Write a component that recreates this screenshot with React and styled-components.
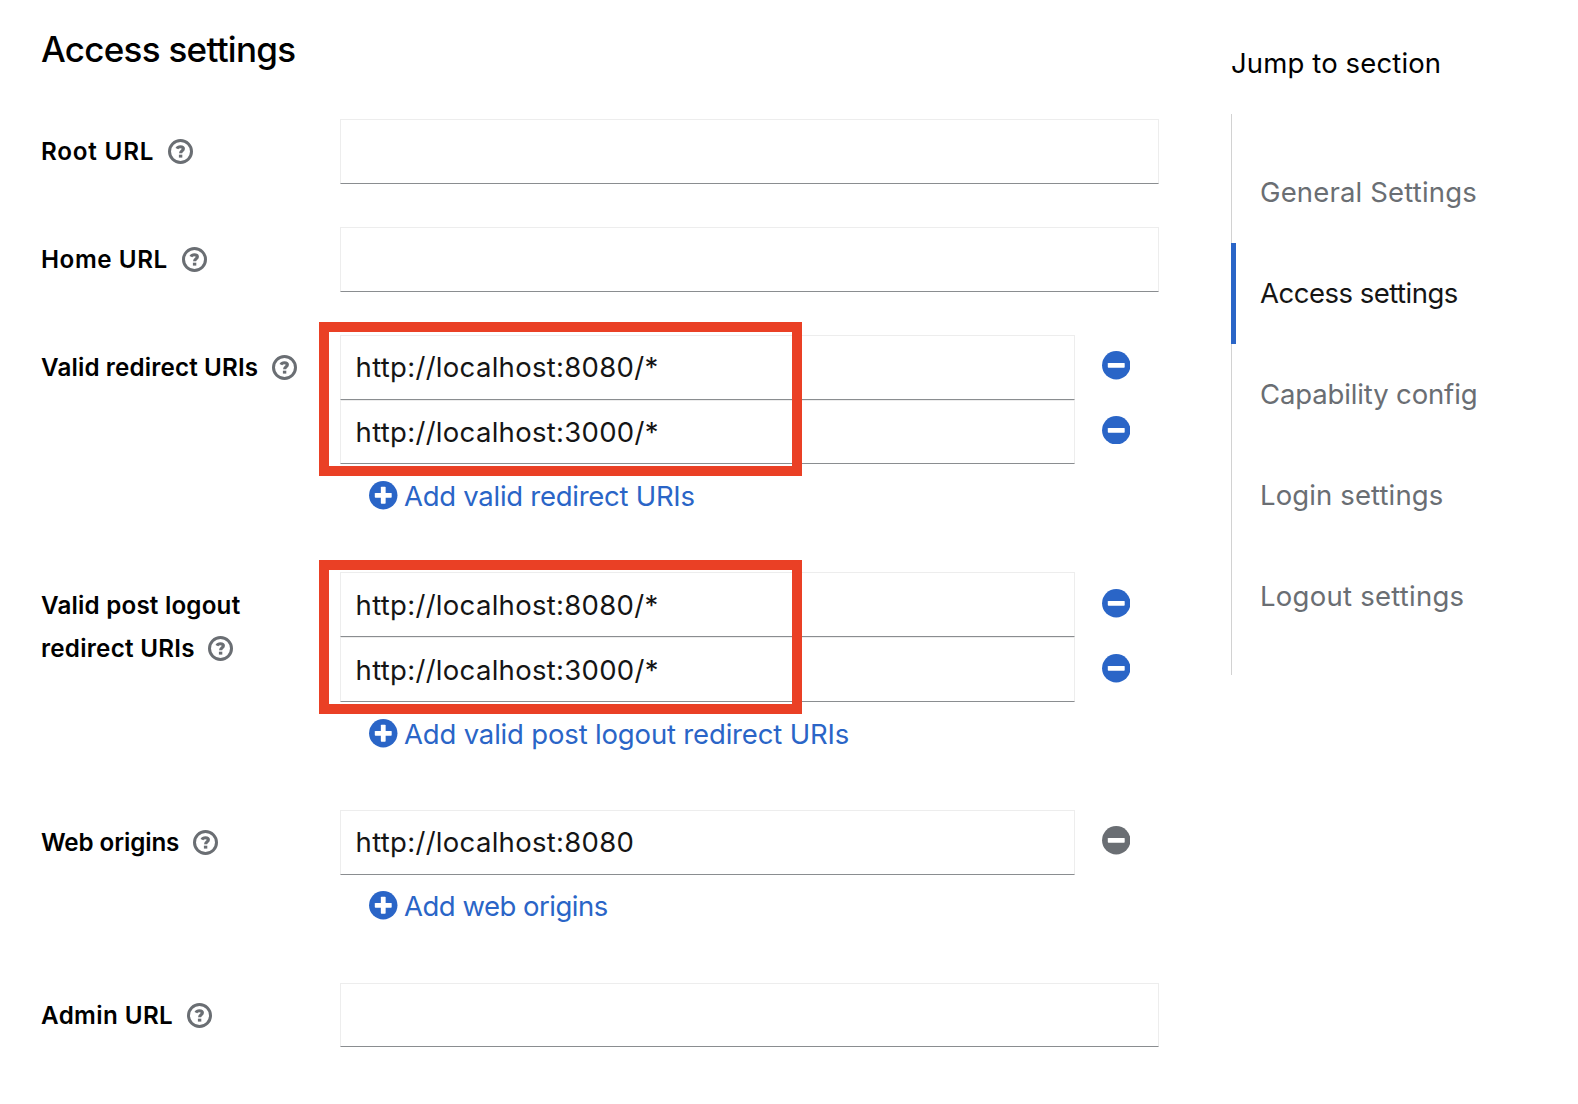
import React from 'react';
import styled, { createGlobalStyle } from 'styled-components';

const BLUE = '#2a65c7';
const GREY = '#6a6e73';

const GlobalStyle = createGlobalStyle`
  *, *::before, *::after { box-sizing: border-box; }
  body {
    margin: 0;
    background: #fff;
    color: #151515;
    font-family: Inter, "Liberation Sans", sans-serif;
    font-size: 27.5px;
  }
`;

const Page = styled.div`
  display: flex;
  align-items: flex-start;
  gap: 72px;
  width: 1578px;
  height: 1104px;
  overflow: hidden;
`;

const Main = styled.main`
  flex: none;
  width: 1159px;
  padding: 25px 0 0 41px;
`;

const Title = styled.h1`
  margin: 0 0 46px;
  font-size: 35px;
  line-height: 48px;
  font-weight: 500;
  letter-spacing: -0.72px;
  color: #000;
`;

const Form = styled.form`
  display: flex;
  flex-direction: column;
  gap: 43px;
`;

const Group = styled.div`
  display: grid;
  grid-template-columns: 299px 1fr;
  align-items: start;
`;

const Label = styled.div`
  padding-top: ${p => 11 + (p.$drop || 0)}px;
`;

const LabelLine = styled.div`
  display: flex;
  align-items: center;
  gap: ${p => p.$gap || 14}px;
  height: 43px;
`;

const LabelText = styled.label`
  font-size: 24.2px;
  line-height: 43px;
  font-weight: 600;
  letter-spacing: ${p => p.$spacing}px;
  white-space: nowrap;
  color: #000;
`;

const HelpButton = styled.button`
  display: flex;
  padding: 0;
  margin-top: -1px;
  border: 0;
  background: none;
  color: ${GREY};
`;

const Field = styled.div`
  position: relative;
`;

const Row = styled.div`
  display: flex;
  align-items: center;
  gap: 26.5px;
`;

const TextInput = styled.input`
  display: block;
  flex: none;
  width: ${p => (p.$removable ? 735 : 819)}px;
  height: ${p => p.$height || 65}px;
  margin: 0;
  padding: 0 14px ${p => p.$lift || 0}px 14.6px;
  border: 1px solid #ededed;
  border-bottom-color: #8a8d90;
  border-radius: 0;
  outline: 0;
  background: #fff;
  color: #151515;
  font: inherit;
  letter-spacing: 0.3px;
`;

const RemoveButton = styled.button`
  display: flex;
  padding: 0;
  margin: ${p => (p.$drop ? '0 0 2px' : '0 0 4px')};
  border: 0;
  background: none;
  color: ${p => (p.disabled ? GREY : BLUE)};
`;

const AddButton = styled.button`
  display: flex;
  align-items: center;
  gap: 6.5px;
  height: ${p => 63 - 2 * (p.$lift || 0)}px;
  margin: 0 0 ${p => 2 + 2 * (p.$lift || 0)}px;
  padding: 0 0 0 29px;
  border: 0;
  background: none;
  color: ${BLUE};
  font: inherit;
  letter-spacing: ${p => p.$spacing}px;
  white-space: nowrap;
`;

const Highlight = styled.div`
  position: absolute;
  left: -21px;
  top: ${p => p.$top}px;
  width: 483px;
  height: 154px;
  border: 10px solid #ea4025;
  pointer-events: none;
`;

const Aside = styled.aside`
  flex: none;
  padding-top: 42px;
`;

const AsideTitle = styled.div`
  height: 72px;
  line-height: 42px;
  letter-spacing: 0.13px;
  color: #000;
`;

const JumpList = styled.ul`
  margin: 0;
  padding: 28px 0;
  list-style: none;
  box-shadow: inset 1px 0 0 #d2d2d2;
`;

const JumpItem = styled.li`
  height: 101px;
  padding-left: ${p => (p.$current ? 24 : 29)}px;
  border-left: ${p => (p.$current ? `5px solid ${BLUE}` : '0')};
  line-height: 101px;
  letter-spacing: ${p => p.$spacing}px;
  white-space: nowrap;
  color: ${p => (p.$current ? '#151515' : GREY)};
`;

const HelpIcon = () => (
  <svg width="25" height="25" viewBox="0 0 25 25" fill="none">
    <circle cx="12.5" cy="12.5" r="11" stroke="currentColor" strokeWidth="3" />
    <path
      d="M8.9 9.6C9.6 8.2 10.9 7.8 12.4 7.8C14.2 7.8 15.4 8.5 15.4 9.8C15.4 11.8 12.6 11.7 12.6 14.2"
      stroke="currentColor"
      strokeWidth="3.1"
    />
    <rect x="10.9" y="15.7" width="3.4" height="2.9" fill="currentColor" />
  </svg>
);

const CircleIcon = ({ plus }) => (
  <svg width="28.5" height="28.5" viewBox="0 0 28.5 28.5">
    <circle cx="14.25" cy="14.25" r="14.2" fill="currentColor" />
    <rect x="5.8" y="11.9" width="16.9" height="4.8" rx="0.7" fill="#fff" />
    {plus && <rect x="11.85" y="5.8" width="4.8" height="16.9" rx="0.7" fill="#fff" />}
  </svg>
);

const GROUPS = [
  { label: [['Root URL', 0.8]], gap: 14 },
  { label: [['Home URL', 0.58]], gap: 14.5 },
  {
    label: [['Valid redirect URIs', 0.15]],
    gap: 13.5,
    values: [['http://localhost:8080/*', 65, 2], ['http://localhost:3000/*', 64]],
    add: ['Add valid redirect URIs', -0.27],
    highlight: -13,
  },
  {
    label: [['Valid post logout', 0.2], ['redirect URIs', 0.25]],
    gap: 13.5,
    values: [['http://localhost:8080/*', 65], ['http://localhost:3000/*', 65]],
    add: ['Add valid post logout redirect URIs', -0.17],
    highlight: -12,
    drop: 1,
  },
  {
    label: [['Web origins', -0.1]],
    values: [['http://localhost:8080', 65, 2]],
    add: ['Add web origins', -0.5],
    addLift: 1,
  },
  { label: [['Admin URL', 0.4]], height: 64 },
];

const JUMPS = [
  ['General Settings', 0.16],
  ['Access settings', -0.5],
  ['Capability config', -0.14],
  ['Login settings', 0.12],
  ['Logout settings', 0.25],
];

function FormGroup({ label, gap, values, add, addLift, highlight, drop, height }) {
  return (
    <Group>
      <Label $drop={drop}>
        {label.map(([text, spacing], i) => (
          <LabelLine key={text} $gap={gap}>
            <LabelText $spacing={spacing}>{text}</LabelText>
            {i === label.length - 1 && (
              <HelpButton type="button"><HelpIcon /></HelpButton>
            )}
          </LabelLine>
        ))}
      </Label>
      <Field>
        {!values && <TextInput $height={height} />}
        {values && values.map(([value, h, lift]) => (
          <Row key={value}>
            <TextInput $removable $height={h} $lift={lift} defaultValue={value} />
            <RemoveButton type="button" $drop={drop} disabled={values.length === 1}>
              <CircleIcon />
            </RemoveButton>
          </Row>
        ))}
        {add && (
          <AddButton type="button" $spacing={add[1]} $lift={addLift}>
            <CircleIcon plus />
            {add[0]}
          </AddButton>
        )}
        {highlight && <Highlight $top={highlight} />}
      </Field>
    </Group>
  );
}

export default function App() {
  return (
    <>
      <GlobalStyle />
      <Page>
        <Main>
          <Title>Access settings</Title>
          <Form>
            {GROUPS.map((g, i) => <FormGroup key={i} {...g} />)}
          </Form>
        </Main>
        <Aside>
          <AsideTitle>Jump to section</AsideTitle>
          <JumpList>
            {JUMPS.map(([text, spacing]) => (
              <JumpItem key={text} $spacing={spacing} $current={text === 'Access settings'}>
                {text}
              </JumpItem>
            ))}
          </JumpList>
        </Aside>
      </Page>
    </>
  );
}
